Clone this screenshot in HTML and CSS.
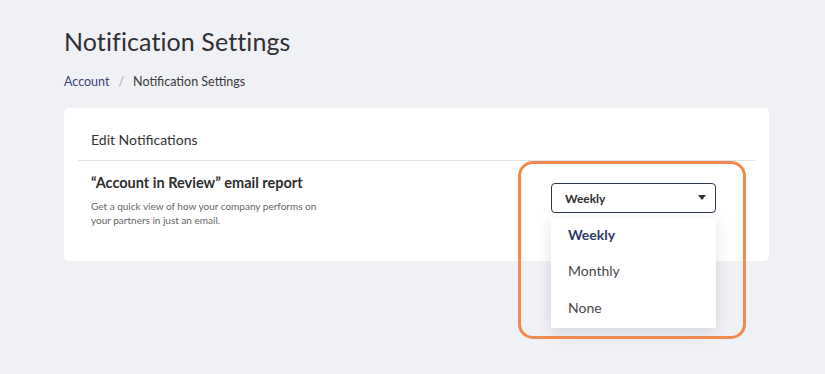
FILE: index.html
```html
<!DOCTYPE html>
<html>
<head>
<meta charset="utf-8">
<link rel="stylesheet" href="styles.css">
</head>
<body>
<main class="page">
  <h1 class="title">Notification Settings</h1>
  <nav class="crumbs">
    <a class="crumb-link">Account</a>
    <span class="crumb-sep">/</span>
    <span class="crumb-current">Notification Settings</span>
  </nav>
  <section class="card">
    <div class="card-head">Edit Notifications</div>
    <div class="setting">
      <div class="setting-text">
        <div class="setting-title">“Account in Review” email report</div>
        <p class="setting-desc">Get a quick view of how your company performs on your partners in just an email.</p>
      </div>
      <div class="select-wrap">
        <div class="select">
          <span class="select-value">Weekly</span>
          <svg class="caret" width="8" height="5" viewBox="0 0 8 5"><path d="M0 0 H8 L4 5 Z" fill="#333"/></svg>
        </div>
        <ul class="menu">
          <li class="menu-item active">Weekly</li>
          <li class="menu-item">Monthly</li>
          <li class="menu-item">None</li>
        </ul>
        <div class="highlight"></div>
      </div>
    </div>
  </section>
</main>
</body>
</html>
```

FILE: styles.css
```css
* { box-sizing: border-box; }
html, body { margin: 0; padding: 0; }
body {
  background: #f0f1f5;
  font-family: "Lato", "Noto Sans", sans-serif;
  color: #333;
  width: 825px;
  height: 374px;
  overflow: hidden;
}
.page {
  padding: 26px 56px 0 64px;
}
.title {
  margin: 0;
  font-size: 25px;
  font-weight: 400;
  line-height: 30px;
  color: #2f3033;
  letter-spacing: 0.1px;
}
.crumbs {
  margin-top: 18px;
  font-size: 12.5px;
  line-height: 16px;
  display: flex;
}
.crumb-link { color: #3d4478; }
.crumb-sep { color: #aaa; margin: 0 9px; }
.crumb-current { color: #3a3a3a; }
.card {
  margin-top: 18px;
  background: #fff;
  border-radius: 5px;
  padding: 0 14px;
  height: 153px;
}
.card-head {
  padding: 24px 13px 12px;
  font-size: 14px;
  line-height: 16px;
  color: #333;
  border-bottom: 1px solid #e2e3e7;
}
.setting {
  display: flex;
  justify-content: space-between;
  padding: 13px 39px 0 13px;
}
.setting-title {
  font-size: 14.5px;
  font-weight: 700;
  line-height: 18px;
  color: #2e2e2e;
}
.setting-desc {
  margin: 7px 0 0;
  width: 236px;
  font-size: 10px;
  line-height: 14px;
  color: #666;
}
.select-wrap {
  position: relative;
  width: 165px;
  margin-top: 9px;
}
.select {
  height: 30px;
  border: 1px solid #2b3a4a;
  border-radius: 4px;
  display: flex;
  align-items: center;
  justify-content: space-between;
  padding: 0 9px 0 13px;
  background: #fff;
}
.select-value {
  font-size: 12px;
  font-weight: 700;
  color: #2e2e2e;
}
.caret { display: block; margin-top: -2px; }
.menu {
  position: absolute;
  top: 35px;
  left: 0;
  width: 165px;
  margin: 0;
  padding: 0;
  list-style: none;
  background: #fff;
  box-shadow: 0 4px 14px rgba(60, 70, 110, 0.15);
  height: 110px;
  z-index: 2;
}
.menu-item {
  padding: 0 17px;
  height: 37px;
  line-height: 37px;
  font-size: 14px;
  color: #4a4a4a;
}
.menu-item:first-child { line-height: 34px; height: 34px; }
.menu-item.active {
  font-weight: 700;
  color: #2d3a6b;
}
.highlight {
  position: absolute;
  left: -33px;
  top: -22px;
  width: 228px;
  height: 178px;
  border: 3px solid #f08a4e;
  border-radius: 15px;
  z-index: 3;
  pointer-events: none;
}
```
